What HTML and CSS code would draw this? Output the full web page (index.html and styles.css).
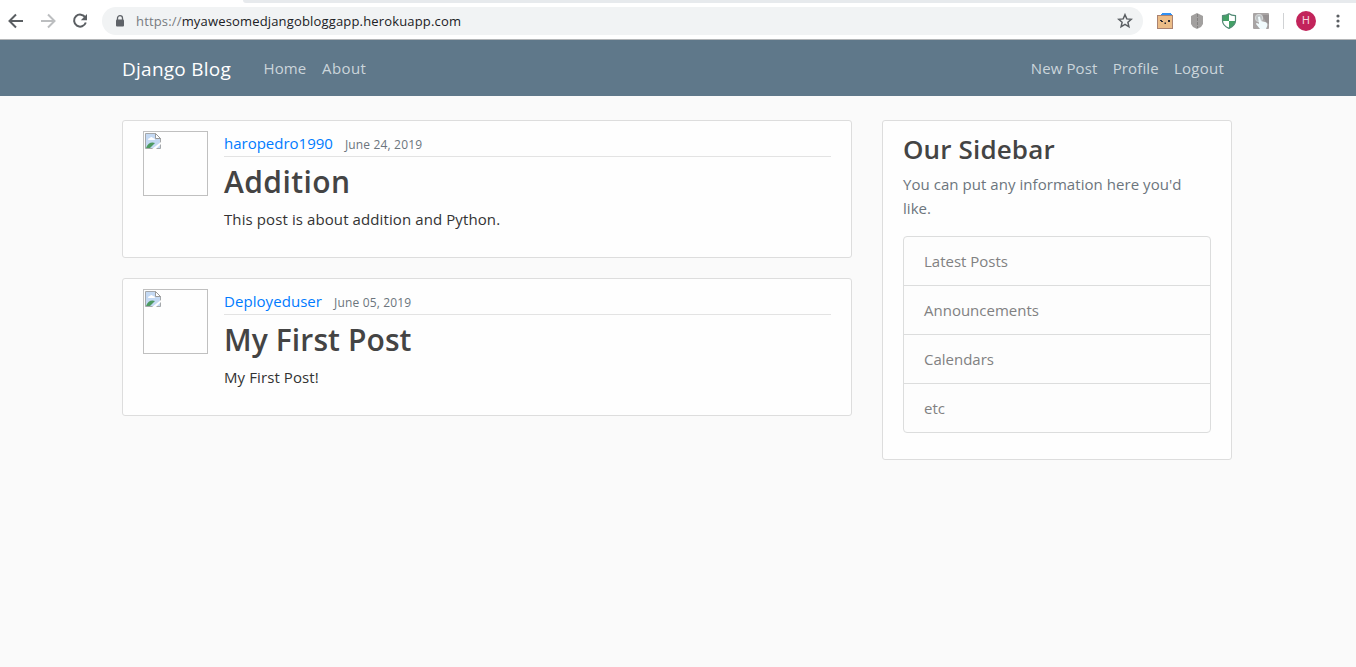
FILE: index.html
```html
<!DOCTYPE html>
<html lang="en">
<head>
<meta charset="utf-8">
<title>Django Blog</title>
<link rel="stylesheet" href="styles.css">
</head>
<body>
<div class="browser">
  <div class="tabstrip"></div>
  <div class="toolbar">
    <svg class="nav-icon" width="16" height="16" viewBox="0 0 16 16"><path d="M15 8H2M8 1.5 1.5 8 8 14.5" fill="none" stroke="#5a5e62" stroke-width="2"/></svg>
    <svg class="nav-icon" width="16" height="16" viewBox="0 0 16 16"><path d="M1 8h13M8 1.500 14.500 8 8 14.500" fill="none" stroke="#bcbec0" stroke-width="2"/></svg>
    <svg class="nav-icon" width="16" height="16" viewBox="0 0 16 16"><path d="M13.300 4.600A6 6 0 1 0 13.800 9.500" fill="none" stroke="#5a5e62" stroke-width="2"/><path d="M15 1v6.200H8.800z" fill="#5a5e62"/></svg>
    <div class="omnibox">
      <svg class="lock" width="10" height="12" viewBox="0 0 10 12"><path d="M2.500 5V3a2.500 2.300 0 0 1 5 0v2" fill="none" stroke="#5f6368" stroke-width="1.300"/><rect x="1" y="4.500" width="8" height="7" rx="1" fill="#5f6368"/></svg>
      <span class="url"><span class="scheme">https://</span>myawesomedjangobloggapp.herokuapp.com</span>
      <svg class="star" width="16" height="16" viewBox="0 0 16 16"><path d="m8 1.700 1.800 4.200 4.500.4-3.400 3 1 4.500L8 11.400l-3.900 2.400 1-4.500-3.400-3 4.500-.4z" fill="none" stroke="#5a5e62" stroke-width="1.500"/></svg>
    </div>
    <div class="extensions">
      <svg width="16" height="16" viewBox="0 0 16 16"><rect x=".5" y="2.500" width="15" height="13" fill="#ebbc87" stroke="#aa8372"/><path d="M5 0h9v1h1v1H4V1h1z" fill="#2f91f5"/><path d="M3 7h2v1h1v1H4V8H3zM11 7h2v2h-2zM7.500 9.500H9V11H7.500z" fill="#252530"/></svg>
      <svg width="16" height="16" viewBox="0 0 16 16"><path d="m8 0 6 3v8l-2 3-4 2-4-2-2-3V3z" fill="#a2a09f"/><path d="M8.500 1v14" stroke="#767473" stroke-width=".7" stroke-dasharray="3 1"/></svg>
      <svg width="16" height="16" viewBox="0 0 16 16"><path d="M8 .7c2 1.400 4 1.800 6.500 2v5C14.500 11.700 11 14 8 15.400 5 14 1.500 11.700 1.500 7.700v-5C4 2.500 6 2.100 8 .7z" fill="#fff"/><path d="M8 .7V8H1.500V2.700C4 2.500 6 2.100 8 .7zM8 8h6.500C14.200 11.800 11 14 8 15.400z" fill="#43a066"/><path d="M8 .7c2 1.400 4 1.800 6.500 2v5C14.500 11.700 11 14 8 15.400 5 14 1.500 11.700 1.500 7.700v-5C4 2.500 6 2.100 8 .7z" fill="none" stroke="#518a75" stroke-width="1.200"/></svg>
      <svg width="16" height="16" viewBox="0 0 16 16"><rect width="16" height="16" rx="1" fill="#a8a4a4"/><path d="M9 2h7v9l-3-2z" fill="#969293"/><circle cx="6" cy="5" r="3.700" fill="#bdc2c4" stroke="#d5d7d8"/><path d="M5 4q1.500-1 2 0l1 4 5 1.200q2 1 1.300 3.500L13 16H7l-4-5q0-1 1-1l2 1z" fill="#f1fbfd"/></svg>
    </div>
    <span class="divider"></span>
    <span class="avatar">H</span>
    <svg class="menu" width="4" height="14" viewBox="0 0 4 14"><g fill="#5a5e62"><circle cx="2" cy="2" r="1.600"/><circle cx="2" cy="7" r="1.600"/><circle cx="2" cy="12" r="1.600"/></g></svg>
  </div>
</div>
<header class="navbar">
  <nav class="navbar-inner">
    <a class="brand">Django Blog</a>
    <a class="nav-link home">Home</a>
    <a class="nav-link about">About</a>
    <div class="nav-right">
      <a class="nav-link">New Post</a>
      <a class="nav-link">Profile</a>
      <a class="nav-link logout">Logout</a>
    </div>
  </nav>
</header>
<main class="container">
  <div class="posts">
    <article class="card post">
      <div class="post-image"><svg width="16" height="16" viewBox="0 0 16 16"><path d="M.5.500h10l5 5v10H.5z" fill="#c4d9f3" stroke="#a5a8ab"/><path d="M3 7q0-2 2-2 1-2 3 0 2 0 2 2z" fill="#fff"/><path d="M1 15q3-7 9-5l-5 5z" fill="#4d9a61"/><path d="M10.500.500v5h5z" fill="#fff" stroke="#999"/><path d="m7 16 9-7v2l-5 5z" fill="#fefefe"/></svg></div>
      <div class="post-body">
        <div class="meta"><a class="author">haropedro1990</a><small class="date">June 24, 2019</small></div>
        <h2 class="addition">Addition</h2>
        <p class="post-text">This post is about addition and Python.</p>
      </div>
    </article>
    <article class="card post">
      <div class="post-image"><svg width="16" height="16" viewBox="0 0 16 16"><path d="M.5.500h10l5 5v10H.5z" fill="#c4d9f3" stroke="#a5a8ab"/><path d="M3 7q0-2 2-2 1-2 3 0 2 0 2 2z" fill="#fff"/><path d="M1 15q3-7 9-5l-5 5z" fill="#4d9a61"/><path d="M10.500.500v5h5z" fill="#fff" stroke="#999"/><path d="m7 16 9-7v2l-5 5z" fill="#fefefe"/></svg></div>
      <div class="post-body">
        <div class="meta"><a class="author deployed">Deployeduser</a><small class="date">June 05, 2019</small></div>
        <h2>My First Post</h2>
        <p class="post-text">My First Post!</p>
      </div>
    </article>
  </div>
  <aside class="card sidebar">
    <h3>Our Sidebar</h3>
    <p class="muted">You can put any information here you'd<br>like.</p>
    <ul class="list">
      <li>Latest Posts</li>
      <li>Announcements</li>
      <li>Calendars</li>
      <li>etc</li>
    </ul>
  </aside>
</main>
</body>
</html>
```
FILE: styles.css
```css
* { box-sizing: border-box; }
body { margin: 0; background: #fafafa; color: #333; font: 15px/24px "Open Sans", "Noto Sans", sans-serif; height: 667px; overflow: hidden; }
svg { display: block; flex: none; }
.browser { height: 40px; background: #fff; border-bottom: 1px solid #b4b6b8; }
.tabstrip { height: 3px; margin-left: 243px; background: #e7eaed; border-bottom-left-radius: 8px; }
.toolbar { display: flex; align-items: center; height: 36px; padding: 0 8px; }
.nav-icon { margin-right: 16px; }
.omnibox { display: flex; flex: none; align-items: center; width: 1041px; height: 28px; margin-left: -2px; padding: 0 10px 0 13px; border-radius: 14px; background: #f1f3f4; }
.url { flex: 1; padding: 0 0 0 11px; font-size: 13px; line-height: 20px; color: #202124; white-space: nowrap; letter-spacing: .165px; }
.scheme { color: #777b80; }
.extensions { display: flex; gap: 16px; margin-left: 14px; }
.divider { flex: none; width: 1px; height: 16px; margin-left: 14px; background: #d0d2d4; }
.avatar { flex: none; width: 20px; height: 20px; margin: 0 20px 0 12px; border-radius: 50%; background: #c2245b; color: #f5d3df; font: 11px/20px Roboto, sans-serif; text-align: center; }
.navbar { height: 56px; background: #5f788a; }
.navbar-inner { display: flex; align-items: center; width: 1110px; height: 56px; margin-left: 122px; padding: 0 8px 0 0; color: #cbd5db; }
.brand { width: 141.5px; padding-top: 2px; font-size: 19px; line-height: 30px; letter-spacing: .25px; color: #fff; white-space: nowrap; }
.nav-link { white-space: nowrap; margin-right: 15.2px; letter-spacing: .12px; }
.home { margin-right: 15.7px; }
.about { letter-spacing: .4px; }
.nav-right { display: flex; margin-left: auto; }
.nav-link.logout { margin-right: 0; letter-spacing: .25px; }
.container { display: grid; grid-template-columns: 730px 350px; gap: 30px; width: 1110px; margin: 24px 0 0 122px; align-items: start; }
.card { background: #fefefe; border: 1px solid #ddd; border-radius: 3px; padding: 10px 20px; }
.post { display: flex; height: 138px; margin-bottom: 20px; }
.post-image { flex: none; width: 65px; height: 65px; margin-right: 16px; padding: 1px; border: 1px solid #c0c0c0; }
.post-body { flex: 1; }
.meta { display: flex; height: 26px; margin-bottom: 6px; border-bottom: 1px solid #e3e3e3; }
.author { margin-right: 12px; color: #007bff; }
.deployed { letter-spacing: .06px; }
.date { font-size: 12px; line-height: 27px; letter-spacing: .16px; color: #6c757d; }
h2, h3 { margin: 0 0 6px; color: #444; font-weight: 600; white-space: nowrap; letter-spacing: .1px; }
h2 { font-size: 30px; line-height: 38.4px; }
.addition { letter-spacing: .4px; }
h3 { padding-top: 1px; font-size: 26px; line-height: 34px; letter-spacing: .15px; }
p { margin: 0 0 16px; white-space: nowrap; }
.post-text { letter-spacing: .1px; }
.muted { letter-spacing: .05px; }
.sidebar { height: 340px; color: #6c757d; }
.list { margin: 0; padding: 0; list-style: none; border: 1px solid #dcdddd; border-radius: 4px; background: #fdfdfd; }
.list li { height: 49px; padding: 12px 20px; color: #818182; border-bottom: 1px solid #dcdddd; }
.list li:last-child { height: 48px; border-bottom: 0; }
```
